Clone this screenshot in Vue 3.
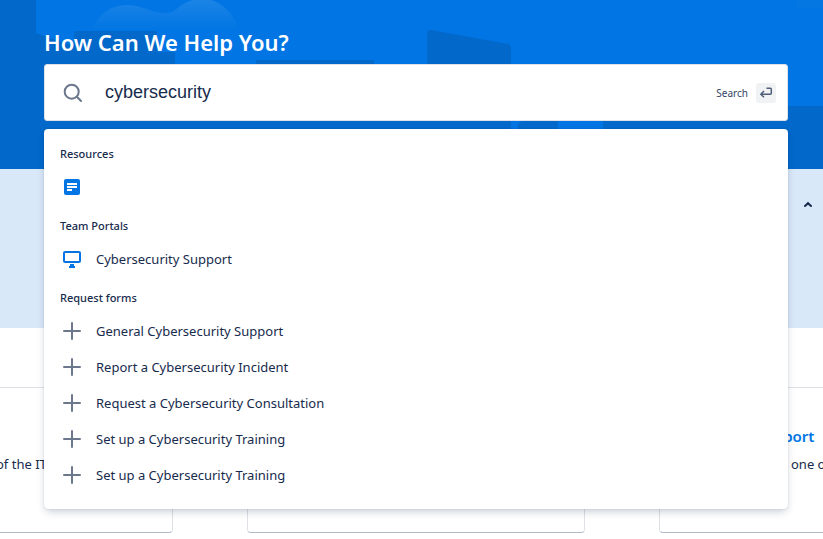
<script setup>
import { ref } from 'vue'

const query = ref('cybersecurity')
const groups = [
  { title: 'Resources', icon: 'document', items: [''] },
  { title: 'Team Portals', icon: 'screen', items: ['Cybersecurity Support'] },
  {
    title: 'Request forms',
    icon: 'plus',
    items: [
      'General Cybersecurity Support',
      'Report a Cybersecurity Incident',
      'Request a Cybersecurity Consultation',
      'Set up a Cybersecurity Training',
      'Set up a Cybersecurity Training',
    ],
  },
]
</script>

<template>
  <div class="page">
    <header class="hero">
      <svg class="backdrop" viewBox="0 0 823 169" preserveAspectRatio="none" aria-hidden="true">
        <defs>
          <linearGradient id="cloud" x1="0" y1="0" x2="0" y2="1">
            <stop offset="0" stop-color="#fff" stop-opacity=".11" />
            <stop offset="1" stop-color="#fff" stop-opacity="0" />
          </linearGradient>
        </defs>
        <rect width="823" height="169" fill="#0268ca" />
        <path d="M36 0H823V106H603V169H511V100H175V80L44 36L36 33Z" fill="#0075e3" />
        <path d="M91 31C98 14 111 5 126 5C143 5 151 13 166 13C179 13 179 -1 203 -1C220 -1 235 14 239 31Z" fill="url(#cloud)" />
        <path d="M74 33Q74 31 76 31H155Q157 31 157 33V52H173Q175 52 175 54V100H74Z" fill="#0268ca" />
        <path d="M256 60H374V125H256Z" fill="#0268ca" />
        <path d="M427 33Q427 30 431 30L508 44Q511 45 511 48V125H427Z" fill="#0268ca" />
        <path d="M518 169V126Q518 122 523 121H558V169Z" fill="#0268ca" />
        <path d="M796 0H823V8H796Z" fill="#fff" fill-opacity=".02" />
      </svg>
      <div class="hero-content">
        <h1>How Can We Help You?</h1>
        <div class="finder">
          <form class="search" role="search" @submit.prevent>
            <svg class="glass" viewBox="0 0 20 20" aria-hidden="true">
              <circle cx="8.7" cy="8.7" r="7" />
              <path d="M13.8 13.8L18 18" />
            </svg>
            <input v-model="query" type="text" aria-label="Search" autocomplete="off" />
            <button type="submit" class="submit">
              <span>Search</span>
              <span class="key">
                <svg viewBox="0 0 20 20" aria-hidden="true">
                  <path d="M10.5 5.2H14.3Q15.3 5.2 15.3 6.2V10.3Q15.3 11.3 14.3 11.3H5M8 8L4.8 11.3L8 14.3" />
                </svg>
              </span>
            </button>
          </form>
          <div class="results">
            <section v-for="group in groups" :key="group.title">
              <h2>{{ group.title }}</h2>
              <ul>
                <li v-for="(item, i) in group.items" :key="i">
                  <a href="#">
                    <svg v-if="group.icon === 'document'" viewBox="0 0 24 24" aria-hidden="true">
                      <rect x="4" y="4" width="16" height="16" rx="2" fill="#0075e3" />
                      <path d="M7 8H17V10H7ZM7 11H17V13H7ZM7 14H12V16H7Z" fill="#fff" />
                    </svg>
                    <svg v-else-if="group.icon === 'screen'" viewBox="0 0 24 24" aria-hidden="true">
                      <rect x="4" y="5" width="16" height="10" rx="1" fill="none" stroke="#0075e3" stroke-width="2" />
                      <path d="M10 17H14V19H15V21H9V19H10Z" fill="#0075e3" />
                    </svg>
                    <svg v-else viewBox="0 0 24 24" aria-hidden="true">
                      <path d="M12 4V20M4 12H20" fill="none" stroke="#6b778c" stroke-width="2" stroke-linecap="round" />
                    </svg>
                    <span>{{ item }}</span>
                  </a>
                </li>
              </ul>
            </section>
          </div>
        </div>
      </div>
    </header>

    <div class="notice">
      <button type="button" aria-label="Collapse">
        <svg viewBox="0 0 16 16" aria-hidden="true"><path d="M5 9L8 6.2L11 9" /></svg>
      </button>
    </div>

    <main class="portals">
      <article class="card first"><p>of the IT</p></article>
      <article class="card"></article>
      <article class="card last">
        <h3><a href="#">Support</a></h3>
        <p>one of</p>
      </article>
    </main>
  </div>
</template>

<style>
body {
  margin: 0;
  background: #fff;
}
</style>

<style scoped>
.page {
  min-height: 100vh;
  overflow: hidden;
  color: #172b4d;
  font-family: "Noto Sans", "Open Sans", sans-serif;
  font-size: 13px;
  line-height: 20px;
}
.hero {
  position: relative;
  z-index: 1;
}
.backdrop {
  position: absolute;
  inset: 0;
  width: 100%;
  height: 100%;
}
.hero-content {
  position: relative;
  padding: 28px 35px 48px 44px;
}
h1 {
  margin: 0 0 8px;
  color: #fff;
  font-size: 22px;
  font-weight: 600;
  line-height: 28px;
}
.finder {
  position: relative;
}
.search {
  display: flex;
  align-items: center;
  box-sizing: border-box;
  height: 57px;
  padding: 0 11px 0 18px;
  border: 1px solid #dfe1e6;
  border-radius: 3px;
  background: #fff;
}
.glass {
  flex: none;
  width: 20px;
  height: 20px;
  fill: none;
  stroke: #6b778c;
  stroke-width: 2;
  stroke-linecap: round;
}
.search input {
  flex: 1;
  min-width: 0;
  padding: 0 0 2px 22px;
  border: 0;
  outline: 0;
  background: none;
  color: #172b4d;
  font: 18px/24px "Liberation Sans", Arial, sans-serif;
}
.submit {
  display: flex;
  align-items: center;
  gap: 8px;
  padding: 0;
  border: 0;
  background: none;
  color: #344563;
  font: 10px/20px "Noto Sans", "Open Sans", sans-serif;
}
.key {
  display: flex;
  width: 20px;
  height: 20px;
  border-radius: 3px;
  background: #f1f2f4;
}
.key svg {
  width: 20px;
  height: 20px;
  fill: none;
  stroke: #505f79;
  stroke-width: 1.5;
  stroke-linejoin: round;
}
.results {
  position: absolute;
  top: calc(100% + 8px);
  left: 0;
  right: 0;
  padding: 4px 0 16px;
  border-radius: 4px;
  background: #fff;
  box-shadow: 0 4px 8px -2px rgba(9, 30, 66, 0.25), 0 0 1px rgba(9, 30, 66, 0.31);
}
h2 {
  margin: 0;
  padding: 11px 16px 5px;
  font-size: 11px;
  font-weight: 500;
  line-height: 20px;
}
ul {
  margin: 0;
  padding: 0;
  list-style: none;
}
li a {
  display: flex;
  align-items: center;
  gap: 12px;
  height: 36px;
  padding: 0 16px;
  color: #172b4d;
  text-decoration: none;
}
li svg {
  flex: none;
  width: 24px;
  height: 24px;
}
.notice {
  display: flex;
  justify-content: flex-end;
  height: 131px;
  padding: 28px 7px 0;
  background: #d8e8f8;
}
.notice button {
  width: 16px;
  height: 16px;
  padding: 0;
  border: 0;
  background: none;
}
.notice svg {
  display: block;
  width: 16px;
  height: 16px;
  fill: none;
  stroke: #172b4d;
  stroke-width: 2;
  stroke-linecap: round;
}
.portals {
  display: grid;
  grid-template-columns: repeat(3, 338px);
  justify-content: center;
  gap: 74px;
  margin-top: 59px;
  padding: 0 35px 0 44px;
  border-top: 1px solid #dfe1e6;
}
.card {
  display: flex;
  flex-direction: column;
  justify-content: flex-end;
  gap: 8px;
  box-sizing: border-box;
  height: 145px;
  padding-bottom: 58px;
  border: 1px solid #dfe1e6;
  border-top: 0;
  border-bottom-color: #b3bacb;
  border-radius: 4px;
}
.card h3 {
  margin: 0;
  padding-left: 96px;
  font-size: 15px;
  font-weight: 600;
  line-height: 20px;
}
.card h3 a {
  color: #0075e3;
  text-decoration: none;
}
.card p {
  margin: 0;
}
.first p {
  padding-left: 160px;
}
.last p {
  padding-left: 131px;
}
</style>
